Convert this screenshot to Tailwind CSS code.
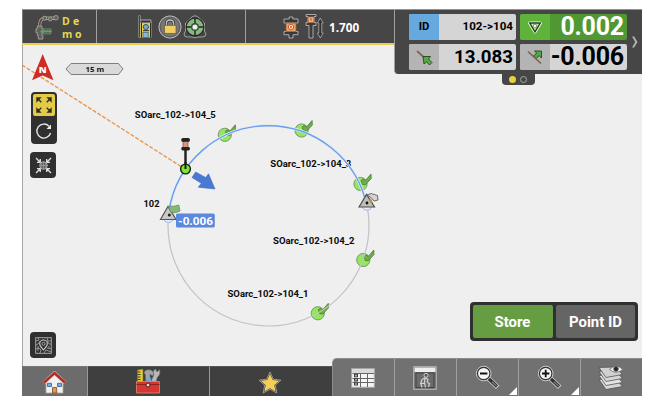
<!DOCTYPE html>
<html lang="en">
<head>
    <meta charset="UTF-8">
    <meta name="viewport" content="width=device-width, initial-scale=1.0">
    <title>Stakeout</title>
    <script src="https://cdn.jsdelivr.net/npm/@tailwindcss/browser@4"></script>
</head>
<body class="bg-white overflow-hidden font-['Roboto',sans-serif]">

    <div class="relative ml-[22px] mt-[9px] w-[620px] h-[387px] flex flex-col bg-[#efefef] overflow-hidden">

        <!-- Map -->
        <svg class="absolute inset-0" width="620" height="387" viewBox="22 9 620 387">
            <defs>
                <g id="check">
                    <circle r="6.6" fill="#92e85c" stroke="#7d9671" stroke-width="1"/>
                    <path d="M.5 -3.6 L2.5 -5 L5 -3.6 L10.5 -10 L10.7 -5.5 L5 .8 L2 .5Z" fill="#6cae4c" stroke="#477c35" stroke-width=".8" stroke-linejoin="round"/>
                </g>
            </defs>
            <path d="M22.5 45V366" stroke="#a5a5a5"/>
            <path d="M22 65 L185 169" fill="none" stroke="#ea9850" stroke-width="1.4" stroke-dasharray="4 1.6"/>

            <g font-family="Roboto, sans-serif" font-weight="700" font-size="9.8" fill="#0c0c0c">
                <text x="134.8" y="118" textLength="81" lengthAdjust="spacingAndGlyphs">SOarc_102-&gt;104_5</text>
                <text x="270.3" y="167" textLength="81" lengthAdjust="spacingAndGlyphs">SOarc_102-&gt;104_3</text>
                <text x="273" y="243.5" textLength="81.5" lengthAdjust="spacingAndGlyphs">SOarc_102-&gt;104_2</text>
                <text x="227.5" y="296.7" textLength="81" lengthAdjust="spacingAndGlyphs">SOarc_102-&gt;104_1</text>
                <text x="143.5" y="207" textLength="16" lengthAdjust="spacingAndGlyphs">102</text>
            </g>

            <use href="#check" x="224.8" y="134.8"/>
            <use href="#check" x="301.6" y="130.5"/>
            <use href="#check" x="360.5" y="184"/>
            <use href="#check" x="363.3" y="260"/>
            <use href="#check" x="317.8" y="313.3"/>

            <circle cx="268.5" cy="225.5" r="100.5" fill="none" stroke="#c3c3c3" stroke-width="1.2"/>
            <path d="M169 211 A100.5 100.5 0 0 1 367 207" fill="none" stroke="#e9edf4" stroke-width="2.8"/>
            <path d="M169 211 A100.5 100.5 0 0 1 367 207" fill="none" stroke="#699ef0" stroke-width="1.4"/>

            <!-- Arc start and end points -->
            <circle cx="168.5" cy="217" r="5.5" fill="#e6edf8" stroke="#9db9e4"/>
            <path d="M160.5 219.5 L168 206.5 L176 219.5Z" fill="#c9c9c9" stroke="#555" stroke-width="1.2"/>
            <circle cx="169.3" cy="215" r="1.5" fill="#222"/>
            <path d="M168.5 206 Q174 207 178.8 205 L180 211 Q175 214 170.5 212Z" fill="#83b879" stroke="#6b8c64" stroke-width=".8"/>
            <circle cx="367" cy="205" r="5.2" fill="#e6edf8" stroke="#9db9e4"/>
            <path d="M359 207 L366.5 194.5 L374.5 207Z" fill="#bdbdbd" stroke="#4d4d4d" stroke-width="1.2"/>
            <circle cx="367" cy="203" r="1.4" fill="#111"/>
            <path d="M370 199 L372 203" stroke="#b8912f" stroke-width="2"/>
            <path d="M367 195 L371 193.5 L377.5 195.5 L378 200 L374 201 L371 197.5Z" fill="#d5d5d5" stroke="#5e5e5e" stroke-width=".9"/>

            <!-- Prism pole -->
            <path d="M185.5 148V169" stroke="#1d1d1d" stroke-width="2.4"/>
            <circle cx="185.5" cy="169" r="4.9" fill="#7fe437" stroke="#172210" stroke-width="1.4"/>
            <path d="M185.5 162V169" stroke="#1d1d1d" stroke-width="2"/>
            <rect x="183" y="141" width="5" height="7" fill="#dd9474" stroke="#7a4c3b" stroke-width=".7"/>
            <rect x="181.3" y="138" width="8.6" height="3.8" rx="1.6" fill="#222"/>
            <rect x="181.3" y="147" width="8.6" height="3.4" rx="1.4" fill="#222"/>
            <path d="M195.7 172 L205.7 177.6 L208.5 173.8 L215 189 L198.3 187.2 L201.3 183.3 L192 177.5Z" fill="#4a79d4" stroke="#3d69bf" stroke-width=".6"/>
            <rect x="176" y="213.6" width="38.8" height="14" rx="1.5" fill="#5c88de"/>
            <text x="178" y="224.8" textLength="35" lengthAdjust="spacingAndGlyphs" font-family="Roboto, sans-serif" font-weight="700" font-size="11.6" fill="#fff">-0.006</text>

            <!-- North arrow -->
            <path d="M42.7 54 L53.5 80.2 L42.7 75.5 L32 80.2Z" fill="#cf2b25"/>
            <text x="38.8" y="73.3" font-family="Open Sans, sans-serif" font-weight="800" font-size="9.5" fill="#fff">N</text>
            <!-- Scale bar -->
            <path d="M66 69 L71 63.5 H118.5 L123 69 L118.5 74.5 H71Z" fill="#dadada" stroke="#7d7d7d"/>
            <text x="85.5" y="72.2" font-family="Open Sans, sans-serif" font-weight="700" font-size="7.8" fill="#161616">15 m</text>
        </svg>

        <!-- Status bar -->
        <header class="relative flex h-9 w-[372px] bg-[#464646] border-t border-t-[#929292] border-b-2 border-b-[#e8cf52]">
            <div class="w-[74px] pl-[12px] flex gap-[4px] border-l border-l-[#777]">
                <svg class="mt-[5px]" width="25" height="25" viewBox="0 0 25 27" fill="none">
                    <path d="M4 14V10.5Q4.5 4.5 9 3.5H21" stroke="#aaa18f" stroke-width="3.6"/>
                    <path d="M4 14V10.5Q4.5 4.5 9 3.5H21" stroke="#504c45" stroke-width="1.9"/>
                    <g fill="#61605d" stroke="#b7b2aa" stroke-width=".8">
                        <circle cx="9.5" cy="3.5" r="2.2"/>
                        <circle cx="15.5" cy="4.5" r="2"/>
                        <circle cx="21.7" cy="3" r="2.5"/>
                        <path d="M1.5 12h5v3h1.5v4H6.5v3h1v4h-5v-4H1.5v-3H0v-4h1.5z"/>
                    </g>
                    <path d="M8 15v5.5h8v-5.5z" fill="#555" stroke="#999" stroke-width=".6"/>
                    <path d="M5 17.7h12" stroke="#52af55" stroke-width="2"/>
                </svg>
                <div class="-ml-[2px] mt-[5px] font-['Open_Sans'] font-bold text-[10.5px] leading-[12.5px] text-[#e5d94f]">
                    <p class="tracking-[3.2px]">De</p>
                    <p class="tracking-[2.6px]">mo</p>
                </div>
            </div>
            <div class="w-[149px] pl-[41px] flex items-center gap-[5px] border-l border-[#a0a0a0]">
                <svg width="15" height="26" viewBox="0 0 15 26">
                    <rect x="2" y="9" width="11.5" height="14.5" fill="#f0d23c"/>
                    <path d="M1 6H13V9H3" fill="#333" stroke="#bbb" stroke-width=".9"/>
                    <path d="M3.4 9V23.5M12.6 9V23.5" stroke="#232323" stroke-width="1.1"/>
                    <path d="M5 16.7H11" stroke="#232323" stroke-width="1"/>
                    <circle cx="7.9" cy="13" r="2.6" fill="#73a6d1" stroke="#395873"/>
                    <rect x="5" y="18.5" width="5.2" height="5" fill="#83b7ea" stroke="#3b638d" stroke-width=".7"/>
                    <path d="M1.5 1.5V23.5" stroke="#c6c6c6" stroke-width="1.9"/>
                    <path d="M1.5 2V23" stroke="#222" stroke-width=".8"/>
                </svg>
                <svg width="24" height="24" viewBox="0 0 24 24">
                    <circle cx="12" cy="12" r="11.1" fill="#777" stroke="#bcbcbc"/>
                    <circle cx="12" cy="12" r="9.8" fill="none" stroke="#555" stroke-width=".8"/>
                    <path d="M8.5 11V8Q8.5 5 12 5T15.5 8V11" fill="none" stroke="#3b3b3b" stroke-width="3"/>
                    <path d="M8.5 11V8Q8.5 5 12 5T15.5 8V11" fill="none" stroke="#c3c3c3" stroke-width="1.3"/>
                    <rect x="6.5" y="10.3" width="11.5" height="8" fill="#efce64" stroke="#745c28" stroke-width=".7"/>
                </svg>
                <svg class="-ml-[4px]" width="24" height="24" viewBox="0 0 24 24">
                    <path d="M9.5 1.5Q12 0 14.5 1.5L21.5 8V16L23 19Q23 22 19.5 22L15 22Q12 23.5 9 22L4.5 22Q1 22 1 19L2.5 16V8Z" fill="#464646" stroke="#ababab" stroke-width=".9"/>
                    <circle cx="12" cy="12" r="8.9" fill="#86ba80" stroke="#292929" stroke-width="1.2"/>
                    <path d="M12 3V21M3 12H21" stroke="#242424" stroke-width="1.5"/>
                    <circle cx="12" cy="12" r="3.3" fill="#eee" stroke="#345334" stroke-width="1.4"/>
                </svg>
            </div>
            <div class="w-[149px] pl-[37px] flex items-center border-l border-[#a0a0a0]">
                <svg class="mt-[2px]" width="16" height="23" viewBox="0 0 16 23">
                    <path d="M6.2 1h3.6v2H15v4H1V3h5.2zM1 15.5h14v3.2h-5V22H6v-3.3H1z" fill="#383838" stroke="#b9b9b9" stroke-width=".9"/>
                    <rect x="3" y="7" width="10" height="8.5" fill="#e9a465" stroke="#975d35" stroke-width=".8"/>
                    <circle cx="8" cy="11" r="2.7" fill="#fce1bd" stroke="#d4573a" stroke-width="1"/>
                    <circle cx="8" cy="11" r="1" fill="#cc4d35"/>
                </svg>
                <svg class="ml-[6px] mb-[1px]" width="19" height="26" viewBox="0 0 19 26">
                    <path d="M1 1.5h10v2H9v6h2v3H8V25H4V12.5H1v-3h2v-6H1z" fill="#3b3b3b" stroke="#b4b4b4" stroke-width=".9"/>
                    <rect x="3.2" y="4" width="5.6" height="5.3" fill="#f3bb85" stroke="#b86d3e" stroke-width=".8"/>
                    <circle cx="6" cy="6.5" r="1.2" fill="#da6642"/>
                    <path d="M15.3 5L18.2 10H16.8V20H18.2L15.3 25L12.4 20H13.8V10H12.4Z" fill="#333" stroke="#b4b4b4" stroke-width=".8"/>
                </svg>
                <span class="ml-[5px] mt-[2px] font-['Open_Sans'] font-bold text-[11.7px] text-white">1.700</span>
            </div>
        </header>

        <!-- Stakeout values -->
        <section class="absolute right-0 top-0 w-[248px] h-[65px] pl-[14px] pt-[4px] bg-[#464646] border-t border-t-[#929292] border-l border-l-[#a0a0a0] rounded-bl-[4px] flex">
            <div class="grid grid-cols-2 gap-x-[4px] gap-y-[4px] w-[218px] h-[56px]">
                <div class="flex items-center bg-[#d5d5d5] rounded-[2px]">
                    <div class="w-[30px] h-full bg-[#65a9df] rounded-l-[2px] flex items-center justify-center font-bold text-[11.3px]">ID</div>
                    <span class="flex-1 text-right pr-[3px] font-bold text-[11.6px]">102-&gt;104</span>
                </div>
                <div class="flex items-center bg-[#509831] rounded-[2px]">
                    <div class="w-[30px] h-full bg-[#5fb33a] rounded-l-[2px] flex items-center justify-center">
                        <svg width="14" height="13" viewBox="0 0 14 13">
                            <path d="M1.5 2H12.5L7 11Z" fill="none" stroke="#efffdc" stroke-width="3" stroke-linejoin="round"/>
                            <path d="M1.7 2H12.3L7 10.8Z" fill="#c4edaf" stroke="#26401d" stroke-width="1.4"/>
                            <circle cx="7" cy="5" r="1.8" fill="#fff" stroke="#3c642c" stroke-width=".6"/>
                        </svg>
                    </div>
                    <span class="flex-1 text-right pr-[3px] font-bold text-[25px] tracking-[-0.2px] leading-[26px] text-white">0.002</span>
                </div>
                <div class="flex items-center bg-[#d5d5d5] rounded-[2px]">
                    <div class="w-[30px] h-full bg-[#b4b4b4] rounded-l-[2px] flex items-center justify-center">
                        <svg width="17" height="17" viewBox="0 0 17 17">
                            <path d="M1 2L11 11" stroke="#806452" stroke-width="1.7"/>
                            <path d="M7 7.5H14.5L12.5 10L16 13.5L13.5 16L10.5 12.8L8 15Z" fill="#54ab45" stroke="#28451f" stroke-width=".9"/>
                        </svg>
                    </div>
                    <span class="flex-1 text-right pr-[3px] font-bold text-[18.7px] leading-[26px]">13.083</span>
                </div>
                <div class="flex items-center bg-[#d5d5d5] rounded-[2px]">
                    <div class="w-[30px] h-full bg-[#b4b4b4] rounded-l-[2px] flex items-center justify-center">
                        <svg width="16" height="16" viewBox="0 0 16 16">
                            <path d="M7.5 2H14.5V9L12 6.5L9.5 9.5L6.5 6.8L9.8 4.2Z" fill="#54ab45" stroke="#28451f" stroke-width=".9"/>
                            <path d="M1 2.5L14 14.5" stroke="#806452" stroke-width="1.7"/>
                        </svg>
                    </div>
                    <span class="flex-1 text-right pr-[3px] font-bold text-[25px] tracking-[-0.2px] leading-[26px] whitespace-nowrap">-0.006</span>
                </div>
            </div>
            <svg class="ml-[4px] mt-[21px]" width="8" height="14" viewBox="0 0 8 14">
                <path d="M1 1.5H3.2L6.5 7L3.2 12.5H1L4.2 7Z" fill="#b1b1b1"/>
            </svg>
        </section>
        <div class="absolute left-[480px] top-[64px] w-[33px] h-[12px] bg-[#464646] rounded-b-[4px] flex items-center justify-center gap-[4px]">
            <span class="-ml-[1px] size-[7px] rounded-full bg-[#e6cf43]"></span>
            <span class="size-[7px] rounded-full border border-[#a9a9a9]"></span>
        </div>

        <!-- Map tools -->
        <div class="relative mt-[47px] ml-[9px] w-[26px] h-[52px] p-[2px] bg-[#303030] rounded-[4px] flex flex-col items-center">
            <div class="w-[22px] h-[22px] bg-[#e2cb48] rounded-[2px] flex items-center justify-center">
                <svg width="16" height="16" viewBox="0 0 16 16" fill="#302d1c" stroke="#302d1c" stroke-width="1.4">
                    <path d="M1 1H4L1 4ZM2 2L5.3 5.3M15 1V4L12 1ZM14 2L10.7 5.3M1 15V12L4 15ZM2 14L5.3 10.7M15 15H12L15 12ZM14 14L10.7 10.7"/>
                </svg>
            </div>
            <svg class="mt-[6px]" width="18" height="18" viewBox="0 0 18 18">
                <path d="M14 4.3A7 7 0 1 0 15.6 11" fill="none" stroke="#e6e6e6" stroke-width="1.4"/>
                <path d="M16 2.5V7H11.5Z" fill="#eee"/>
            </svg>
        </div>
        <div class="relative mt-[8px] ml-[8px] size-[26px] bg-[#303030] rounded-[4px] flex items-center justify-center">
            <svg width="17" height="17" viewBox="0 0 17 17" fill="none" stroke="#e2e2e2" stroke-width="1.3">
                <path d="M1 1L5 5M5.3 2V5.3H2M16 1L12 5M11.7 2V5.3H15M1 16L5 12M5.3 15V11.7H2M16 16L12 12M11.7 15V11.7H15"/>
                <circle cx="8.5" cy="8.5" r="3.8" fill="#505050" stroke="#b7b7b7" stroke-width="1"/>
                <path d="M5 8.5H12M8.5 5V12M6.8 6V11M10.2 6V11" stroke="#aaa" stroke-width=".7"/>
            </svg>
        </div>
        <div class="absolute left-[8px] top-[323px] size-[26px] bg-[#303030] rounded-[4px] flex items-center justify-center">
            <svg width="17" height="17" viewBox="0 0 17 17" fill="none" stroke="#aeaeae" stroke-width=".9">
                <rect x=".7" y=".7" width="15.6" height="15.6"/>
                <path d="M1 4L4 3L3 1M1 8L3 7L5 4M1 12L4 11L6 13L5 16M9 16L11 13L16 15M12 11L16 12M12 4L14 7L16 7M12 1L13 4L16 4M3 9V14M14 9V11" stroke-width=".8"/>
                <path d="M8.5 13Q4.5 8.5 4.7 6.8A3.8 3.8 0 0 1 12.3 6.8Q12.5 8.5 8.5 13Z" fill="#303030" stroke="#c9c9c9" stroke-width="1.1"/>
                <circle cx="8.5" cy="6.8" r="1.5"/>
            </svg>
        </div>

        <!-- Point actions -->
        <div class="absolute left-[448px] top-[293px] w-[168px] h-[39px] p-[3px] bg-[#303030] rounded-[4px] flex gap-[3px] text-white font-bold text-[14.9px]">
            <button class="w-[80px] pt-[2px] pr-[1px] bg-[#669d43] rounded-[2px]">Store</button>
            <button class="flex-1 pt-[2px] bg-[#656565] rounded-[2px]">Point ID</button>
        </div>

        <!-- Toolbar -->
        <footer class="relative mt-auto flex items-end">
            <div class="w-[66px] h-[30px] bg-[#6c6c6c] border-r border-[#999] border-t border-t-[#777] flex items-center justify-center">
                <svg class="mt-[2px] mr-[1px]" width="23" height="23" viewBox="0 0 23 23">
                    <path d="M3 11L11.5 3L20 11V22H3Z" fill="#f1f1ef" stroke="#aaa" stroke-width=".8"/>
                    <path d="M1 11.7L11.5 2L22 11.7" fill="none" stroke="#c4bdb9" stroke-width="3.6"/>
                    <path d="M1 11.5L11.5 2L22 11.5" fill="none" stroke="#b82721" stroke-width="2.4"/>
                    <path d="M4.5 12.3h4v3.2h-4zM14.5 12.3h4v3.2h-4z" fill="#79aee3" stroke="#3e5a88" stroke-width=".8"/>
                    <path d="M9.5 16.5h4.2V22H9.5z" fill="#d79b52" stroke="#76502d" stroke-width=".8"/>
                </svg>
            </div>
            <div class="w-[122px] h-[30px] bg-[#3f3f3f] border-r border-[#999] border-t border-t-[#555] flex items-start justify-center">
                <svg class="mt-[1px] mr-[1px]" width="26" height="26" viewBox="0 0 26 26">
                    <path d="M2.5 2L8 1V14H2.5Z" fill="#e4ce39" stroke="#746b29" stroke-width=".6"/>
                    <path d="M3 4H5.5M3 6.5H5.5M3 9H5.5M3 11.5H5.5" stroke="#222" stroke-width=".9"/>
                    <path d="M9 5Q10 .5 16 2L19 4.5L18 8L15 6.5V13H10.5V7Z" fill="#a5a5a5" stroke="#666" stroke-width=".7"/>
                    <path d="M16 13L18.8 7Q17 3 20.5 .8L22 4L24.5 1.5Q26 7 22.5 9L21 14Z" fill="#b9b9b9" stroke="#666" stroke-width=".7"/>
                    <rect x="12.5" y="9.5" width="3.4" height="4.5" fill="#5eaced"/>
                    <path d="M1.5 13.5H24.5V25H1.5Z" fill="#d43731" stroke="#dd8a7a" stroke-width=".8"/>
                    <path d="M1.5 16.5H24.5" stroke="#8c221e" stroke-width="1"/>
                    <circle cx="13" cy="17" r="2" fill="#e7d7cf" stroke="#501a18"/>
                </svg>
            </div>
            <div class="w-[122px] h-[30px] bg-[#3f3f3f] border-t border-t-[#555] flex items-center justify-center">
                <svg class="mt-[2px] mr-[2px]" width="24" height="23" viewBox="0 0 24 23">
                    <path d="M12 1L15.3 8.3L23 9.2L17.3 14.3L18.8 22L12 18.2L5.2 22L6.7 14.3L1 9.2L8.7 8.3Z" fill="#363636" stroke="#a3a3a3" stroke-width=".9"/>
                    <path d="M12 3L14.8 9L21.2 9.8L16.3 14.2L17.6 20.6L12 17.3L6.4 20.6L7.7 14.2L2.8 9.8L9.2 9Z" fill="#f2ce59"/>
                </svg>
            </div>
            <nav class="grid w-[310px] h-[38px] grid-cols-[62px_62px_62px_62px_62px] bg-[#717171] rounded-tl-[5px] border-t border-l border-[#8c8c8c] overflow-hidden">
                <div class="flex items-center justify-center pr-[1px] border-r border-[#a0a0a0]">
                    <svg width="24" height="20" viewBox="0 0 24 20">
                        <rect x=".7" y=".7" width="22.6" height="18.6" fill="#f4f4f4" stroke="#aaa"/>
                        <path d="M1 3.2H23" stroke="#d9d9d9" stroke-width="4"/>
                        <path d="M1.5 5.5H23M1.5 10.5H23M1.5 14.5H23M9.5 6V19M16.5 6V19" stroke="#666" stroke-width="1"/>
                        <path d="M5 6V18.5" stroke="#3b3b3b" stroke-width="4" stroke-dasharray="3.2 1"/>
                        <path d="M5 6.8V18" stroke="#d0d0d0" stroke-width="1.5" stroke-dasharray="1.6 2.6"/>
                    </svg>
                </div>
                <div class="flex items-center justify-center pr-[1px] border-r border-[#a0a0a0]">
                    <svg width="24" height="24" viewBox="0 0 24 24">
                        <rect x=".7" y=".7" width="22.6" height="22.6" fill="#6d6d6d" stroke="#b7b7b7"/>
                        <rect x="1.5" y="1.5" width="21" height="4.5" fill="#eee"/>
                        <path d="M3 7H21V21.5H3Z" fill="#6b6b6b" stroke="#444"/>
                        <circle cx="13" cy="9.3" r="2" fill="#555" stroke="#ddd" stroke-width=".9"/>
                        <path d="M12 11.8L8.8 13.8L8 16.5M12.5 12L15 13.5L14 16.5M12 11.8L11.5 16.5L12.5 21.5M7.5 16.5L9 21.5M14.5 16.5L16.5 17.5L15.5 21M7 17.3H11" fill="none" stroke="#d3d3d3" stroke-width="1.2"/>
                    </svg>
                </div>
                <div class="relative flex items-center justify-center pr-[1px] border-r border-[#a0a0a0]">
                    <svg width="25" height="25" viewBox="0 0 25 25">
                        <path d="M13 13L22.7 22.2" stroke="#ccc" stroke-width="5"/>
                        <path d="M13 13L22 21.5" stroke="#323232" stroke-width="3.2"/>
                        <path d="M17 16.8L21.5 21" stroke="#777" stroke-width="1.5"/>
                        <circle cx="8.7" cy="8.5" r="7.3" fill="#333" stroke="#ddd" stroke-width=".9"/>
                        <circle cx="8.7" cy="8.5" r="5.6" fill="#f4f4f4"/>
                        <path d="M5 8.5H12.4" stroke="#111" stroke-width="1.8"/>
                    </svg>
                    <svg class="absolute right-[1px] bottom-[1px]" width="8" height="8"><path d="M8 0V8H0Z" fill="#fff"/></svg>
                </div>
                <div class="relative flex items-center justify-center pr-[1px] border-r border-[#a0a0a0]">
                    <svg width="25" height="25" viewBox="0 0 25 25">
                        <path d="M13 13L22.7 22.2" stroke="#ccc" stroke-width="5"/>
                        <path d="M13 13L22 21.5" stroke="#323232" stroke-width="3.2"/>
                        <path d="M17 16.8L21.5 21" stroke="#777" stroke-width="1.5"/>
                        <circle cx="8.7" cy="8.5" r="7.3" fill="#333" stroke="#ddd" stroke-width=".9"/>
                        <circle cx="8.7" cy="8.5" r="5.6" fill="#f4f4f4"/>
                        <path d="M5 8.5H12.4M8.7 4.8V12.2" stroke="#111" stroke-width="1.8"/>
                    </svg>
                    <svg class="absolute right-[1px] bottom-[1px]" width="8" height="8"><path d="M8 0V8H0Z" fill="#fff"/></svg>
                </div>
                <div class="flex items-center justify-center pr-[2px]">
                    <svg width="26" height="26" viewBox="0 0 26 26" stroke="#555" stroke-width=".8">
                        <path d="M1 14.5L17 13L24.5 21.5L8 24.5Z" fill="#d6d6d6"/>
                        <path d="M1 10.5L17 9L24.5 17.5L8 20.5Z" fill="#e4e4e4"/>
                        <path d="M1 6.5L17 5L24.5 13.5L8 16.5Z" fill="#d6d6d6"/>
                        <path d="M1 2.5L17 2L24.5 9.5L8 12.5Z" fill="#d0d0d0"/>
                        <path d="M11.5 4.5Q18 -2 25 4.5Q18 10 11.5 4.5Z" fill="#f4f4f4" stroke="#666"/>
                        <circle cx="18" cy="4" r="2.3" fill="#222"/>
                    </svg>
                </div>
            </nav>
        </footer>
    </div>

</body>
</html>
